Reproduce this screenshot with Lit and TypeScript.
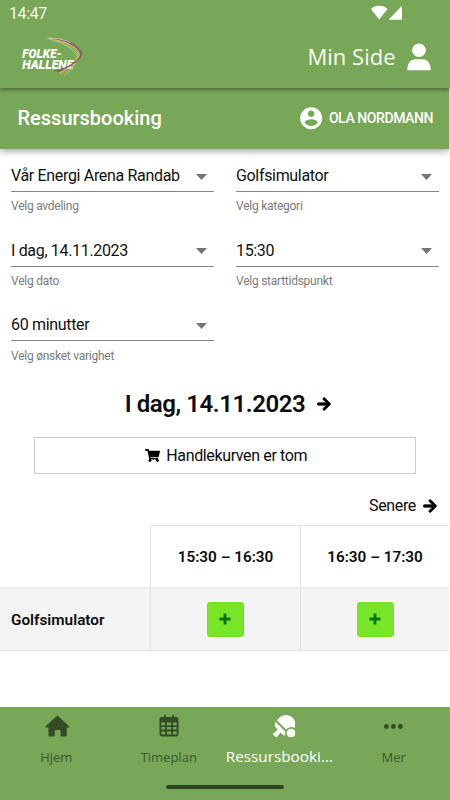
import { LitElement, html, css, svg } from "lit";
import { customElement, property } from "lit/decorators.js";

const arrowPath =
  "M190.5 66.9l22.2-22.2c9.4-9.4 24.6-9.4 33.9 0L441 239c9.4 9.4 9.4 24.6 0 33.9L246.6 467.3c-9.4 9.4-24.6 9.4-33.9 0l-22.2-22.2c-9.5-9.5-9.3-25 .4-34.3L311.4 296H24c-13.3 0-24-10.7-24-24v-32c0-13.3 10.7-24 24-24h287.4L190.9 101.2c-9.8-9.3-10-24.8-.4-34.3z";

const arrow = html`<svg class="arrow" viewBox="-14 18 476 476"><path d=${arrowPath} /></svg>`;

@customElement("select-field")
export class SelectField extends LitElement {
  @property() value = "";
  @property() hint = "";

  static styles = css`
    :host { display: block; height: 74.6px; }
    .value {
      display: flex; align-items: center; justify-content: space-between;
      height: 32px; padding: 0 7px 0 0; box-sizing: border-box;
      font-size: 16px; letter-spacing: -.33px; color: #111; border-bottom: 1px solid #858585;
      white-space: nowrap;
    }
    .caret { width: 11px; height: 6px; fill: #757575; margin-top: 2px; }
    .hint { margin-top: 6.4px; font-size: 12px; letter-spacing: -.25px; line-height: 16px; color: #7b7b7b; }
  `;

  render() {
    return html`
      <div class="value"><span>${this.value}</span>
        <svg class="caret" viewBox="0 0 11 6"><path d="M0 0h11L5.5 6z" /></svg>
      </div>
      <div class="hint">${this.hint}</div>
    `;
  }
}

const homeIcon = svg`<path d="M12.4 .4 24.2 11.2c.5.6.1 1.3-.6 1.3H21.8V20c0 1-.6 1.6-1.6 1.6H16.8c-.7 0-1.2-.5-1.2-1.2V16.2c0-.7-.6-1.3-1.3-1.3H11c-.7 0-1.3.6-1.3 1.3v4.2c0 .7-.5 1.2-1.2 1.2H5.1c-1 0-1.6-.6-1.6-1.6v-7.5H1.2c-.8 0-1.2-.7-.6-1.3z"/>`;

const calendarIcon = svg`<path fill-rule="evenodd" d="M5 0h1.8v2h6.4V0H15v2h2.3c1.2 0 2.2 1 2.2 2.2v15c0 1.2-1 2.2-2.2 2.2H2.7c-1.2 0-2.2-1-2.2-2.2v-15C.5 3 1.5 2 2.7 2H5z
 M2.3 7.6v2.6h3.7V7.6zM7.8 7.6v2.6h4.4V7.6zM14 7.6v2.6h3.7V7.6z
 M2.3 12v2.6h3.7V12zM7.8 12v2.6h4.4V12zM14 12v2.6h3.7V12z
 M2.3 16.4v2.2c0 .6.4 1 1 1H6v-3.2zM7.8 16.4v3.2h4.4v-3.2zM14 16.4v3.2h2.7c.6 0 1-.4 1-1v-2.2z"/>`;

const paddleIcon = svg`<path d="M496.2 296.5C527.7 218.7 512 126.2 449 63.1 365.1-21 229-21 145.1 63.1l-56 56.1 211.5 211.5c46.1-62.1 131.5-77.4 195.6-34.2zM278.3 376.2 57.9 155.9c-27.3 45.3-21.7 105 17.3 144.1l34.5 34.6L6.7 424c-8.6 7.5-9.1 20.7-1 28.8l53.4 53.5c8 8.1 21.2 7.6 28.7-1L177.1 402l35.7 35.7c19.7 19.7 45.6 29 71.3 28.6-8-30-9-60-5.8-90.1z"/><circle cx="412" cy="412" r="100"/>`;

const moreIcon = svg`<circle cx="2.4" cy="2.5" r="2.4"/><circle cx="9.4" cy="2.5" r="2.4"/><circle cx="16.4" cy="2.5" r="2.4"/>`;

const tabs = [
  { label: "Hjem", cls: "home", box: "0 0 25 22", icon: homeIcon },
  { label: "Timeplan", cls: "calendar", box: "0 0 20 21.5", icon: calendarIcon },
  { label: "Ressursbooki…", cls: "paddle", box: "0 0 514 514", icon: paddleIcon },
  { label: "Mer", cls: "more", box: "0 0 19 5", icon: moreIcon },
];

const ribbons = [
  { color: "#45c4dc", d: "M51 39.8C62 43 72 49 75.6 55C78 61 73 70 68 76" },
  { color: "#e6c52c", d: "M50 39.3C63 42 74 49 77 55C78.5 61 71 70 64.5 75.5" },
  { color: "#e0a83a", d: "M49.5 39C64 41 75.5 48 78.2 54.5C79 61 69 70 61.5 74.5" },
  { color: "#c9c6c0", d: "M49 38.6C65 40 77 47 79.4 54C80 61 67 69.5 59.5 73" },
  { color: "#a8403f", d: "M52 38.6C66 39.5 78.5 46.5 80.6 53.5C80.5 61 66 69 57 72" },
  { color: "#8d3f86", d: "M60 39.3C70 41 80 47 81.7 53C82 61 64 69 55 71" },
  { color: "#cfc9c9", d: "M47.5 38.2C56 38 63 39 70 42.5" },
];

@customElement("app-root")
export class AppRoot extends LitElement {
  static styles = css`
    :host {
      display: flex; flex-direction: column; width: 450px; height: 800px;
      overflow: hidden; background: #fff; color: #0c0c0c;
      font-family: Roboto, "Liberation Sans", sans-serif;
    }
    svg { display: block; flex: none; }
    .top { height: 87.5px; flex: none; background: #78a758; color: #fff; position: relative; z-index: 2; box-shadow: 0 2px 4px rgba(0,0,0,.38); }
    .status { display: flex; justify-content: space-between; height: 28px; padding: 0 47px 0 9px; font-size: 16px; letter-spacing: -.4px; line-height: 28px; color: #f1f6ed; }
    .signals { width: 32px; height: 15px; margin-top: 5px; fill: #fff; }
    .brand { display: flex; align-items: center; height: 58px; padding: 0 19px 0 20px; }
    .logo { width: 66px; height: 46px; }
    .logo text { font: italic 900 12px Roboto, "Open Sans", sans-serif; fill: #fff; }
    .mine { margin: 0 0 2px auto; font: 400 22px/30px "Open Sans", "Noto Sans", sans-serif; color: #f8fbf6; }
    .person { width: 24px; height: 28px; fill: #fff; margin-left: 11.5px; }
    .sub { display: flex; align-items: center; height: 61px; flex: none; width: 449px; box-sizing: border-box; padding: 0 16px 0 17.5px; background: #78a758; color: #fff; position: relative; z-index: 1; box-shadow: 0 2px 7px rgba(0,0,0,.38); }
    .title { font-size: 20px; font-weight: 500; }
    .account { width: 26.4px; height: 26.4px; fill: #fff; margin-left: auto; }
    .user { font-size: 14px; letter-spacing: -.42px; font-weight: 500; margin-left: 5px; }
    .filters { display: grid; grid-template-columns: 203px 203px; column-gap: 22px; padding: 11.5px 0 0 11px; flex: none; }
    .day { display: flex; align-items: center; justify-content: center; gap: 12px; height: 36px; margin-top: 2px; font-size: 24px; letter-spacing: -.42px; font-weight: 600; padding-left: 6px; }
    .arrow { width: 14px; height: 14px; fill: #000; stroke: #000; stroke-width: 26; stroke-linejoin: round; }
    .cart { display: flex; align-items: center; justify-content: center; gap: 6.5px; width: 382px; height: 37.5px; box-sizing: border-box; border: 1px solid #cdcdcd; margin: 15px 0 0 34px; font-size: 16px; letter-spacing: -.37px; flex: none; padding-left: 2px; }
    .trolley { width: 15px; height: 13px; }
    .later { display: flex; align-items: center; justify-content: flex-end; gap: 7px; height: 24px; padding-right: 13px; margin-top: 19.5px; font-size: 16px; letter-spacing: -.35px; }
    .slots { display: grid; grid-template-columns: 150px 150px 149px; grid-template-rows: 62px 64px; width: 449px; margin-top: 7.5px; flex: none; font-size: 15.3px; font-weight: 600; }
    .cell { display: flex; align-items: center; justify-content: center; box-sizing: border-box; border-left: 1px solid #e2e2e2; }
    .time { border-top: 1px solid #e2e2e2; }
    .booking { background: #f4f4f4; border-top: 2px solid #ebebeb; border-bottom: 1px solid #e2e2e2; }
    .name { justify-content: flex-start; padding-left: 11px; border-left: 0; }
    .blank { border-left: 0; }
    .add { display: flex; align-items: center; justify-content: center; width: 37px; height: 35px; border-radius: 3px; border: 1px solid #70e216; box-sizing: border-box; background: #79e528; }
    .plus { width: 12px; height: 12px; fill: #08750a; margin: 0 1px 1px 0; }
    .bottom { margin-top: auto; height: 93px; flex: none; background: #78a758; color: #3b592a; font-family: "Open Sans", "Noto Sans", sans-serif; }
    .tabs { display: grid; grid-template-columns: repeat(4, 112.5px); height: 77.5px; }
    .tab { display: flex; flex-direction: column; align-items: center; fill: #344b25; }
    .icon { height: 38px; display: flex; align-items: center; }
    .label { font-size: 13px; line-height: 24px; white-space: nowrap; }
    .home { width: 25px; height: 22px; margin-left: 3px; }
    .calendar { width: 20px; height: 21.5px; }
    .paddle { width: 22.5px; height: 22.5px; margin-left: 5px; }
    .more { width: 19px; height: 5px; }
    .active { color: #fff; fill: #fff; }
    .active .label { font-size: 15.3px; line-height: 22px; padding-right: 4px; }
    .gesture { width: 118px; height: 4.5px; border-radius: 3px; background: #2f4622; margin: 0 auto; }
  `;

  render() {
    return html`
      <header class="top">
        <div class="status"><span>14:47</span>
          <svg class="signals" viewBox="0 0 32 15"><path d="M0 4C4.5-.3 12-.3 16.5 4L8.2 14.5zM31 .7V14.7H17.5z"/></svg>
        </div>
        <div class="brand">
          <svg class="logo" viewBox="20 34 66 46">
            <text x="22.3" y="57.7" textLength="39.5" lengthAdjust="spacingAndGlyphs">FOLKE-</text>
            <text x="22.3" y="69" textLength="51" lengthAdjust="spacingAndGlyphs">HALLENE</text>
            ${ribbons.map((r) => svg`<path fill="none" stroke=${r.color} stroke-width=".9" d=${r.d}/>`)}
          </svg>
          <span class="mine">Min Side</span>
          <svg class="person" viewBox="0 0 24 28"><circle cx="12" cy="7.2" r="6.8"/><path d="M.3 27.3C.3 20 3.5 16.2 8.5 16.2h7c5 0 8.2 3.8 8.2 11.1z"/></svg>
        </div>
      </header>
      <div class="sub">
        <span class="title">Ressursbooking</span>
        <svg class="account" viewBox="0 0 24 24"><path d="M12 2C6.48 2 2 6.48 2 12s4.48 10 10 10 10-4.48 10-10S17.52 2 12 2zm0 3c1.66 0 3 1.34 3 3s-1.34 3-3 3-3-1.34-3-3 1.34-3 3-3zm0 14.2c-2.5 0-4.71-1.28-6-3.22.03-1.99 4-3.08 6-3.08 1.99 0 5.97 1.09 6 3.08-1.29 1.94-3.5 3.22-6 3.22z"/></svg>
        <span class="user">OLA NORDMANN</span>
      </div>
      <div class="filters">
        <select-field value="Vår Energi Arena Randab" hint="Velg avdeling"></select-field>
        <select-field value="Golfsimulator" hint="Velg kategori"></select-field>
        <select-field value="I dag, 14.11.2023" hint="Velg dato"></select-field>
        <select-field value="15:30" hint="Velg starttidspunkt"></select-field>
        <select-field value="60 minutter" hint="Velg ønsket varighet"></select-field>
      </div>
      <div class="day"><span>I dag, 14.11.2023</span>${arrow}</div>
      <div class="cart">
        <svg class="trolley" viewBox="0 0 576 512" preserveAspectRatio="none"><path d="M528.12 301.319l47.273-208C578.806 78.301 567.391 64 551.99 64H159.208l-9.166-44.81C147.758 8.021 137.93 0 126.529 0H24C10.745 0 0 10.745 0 24v16c0 13.255 10.745 24 24 24h69.883l70.248 343.435C147.325 417.1 136 435.222 136 456c0 30.928 25.072 56 56 56s56-25.072 56-56c0-15.674-6.447-29.835-16.824-40h209.647C430.447 426.165 424 440.326 424 456c0 30.928 25.072 56 56 56s56-25.072 56-56c0-22.172-12.888-41.332-31.579-50.405l5.517-24.276c3.413-15.018-8.002-29.319-23.403-29.319H218.117l-6.545-32h293.145c11.206 0 20.92-7.754 23.403-18.681z"/></svg>
        <span>Handlekurven er tom</span>
      </div>
      <div class="later"><span>Senere</span>${arrow}</div>
      <div class="slots">
        <div class="cell blank"></div>
        <div class="cell time">15:30 – 16:30</div>
        <div class="cell time">16:30 – 17:30</div>
        <div class="cell booking name">Golfsimulator</div>
        ${[0, 1].map(() => html`<div class="cell booking"><div class="add"><svg class="plus" viewBox="0 0 12 12"><path d="M4.6.5h2.8v4.1h4.1v2.8H7.4v4.1H4.6V7.4H.5V4.6h4.1z"/></svg></div></div>`)}
      </div>
      <nav class="bottom">
        <div class="tabs">
          ${tabs.map((t, i) => html`<div class="tab ${i === 2 ? "active" : ""}">
            <div class="icon"><svg class=${t.cls} viewBox=${t.box}>${t.icon}</svg></div>
            <div class="label">${t.label}</div>
          </div>`)}
        </div>
        <div class="gesture"></div>
      </nav>
    `;
  }
}
